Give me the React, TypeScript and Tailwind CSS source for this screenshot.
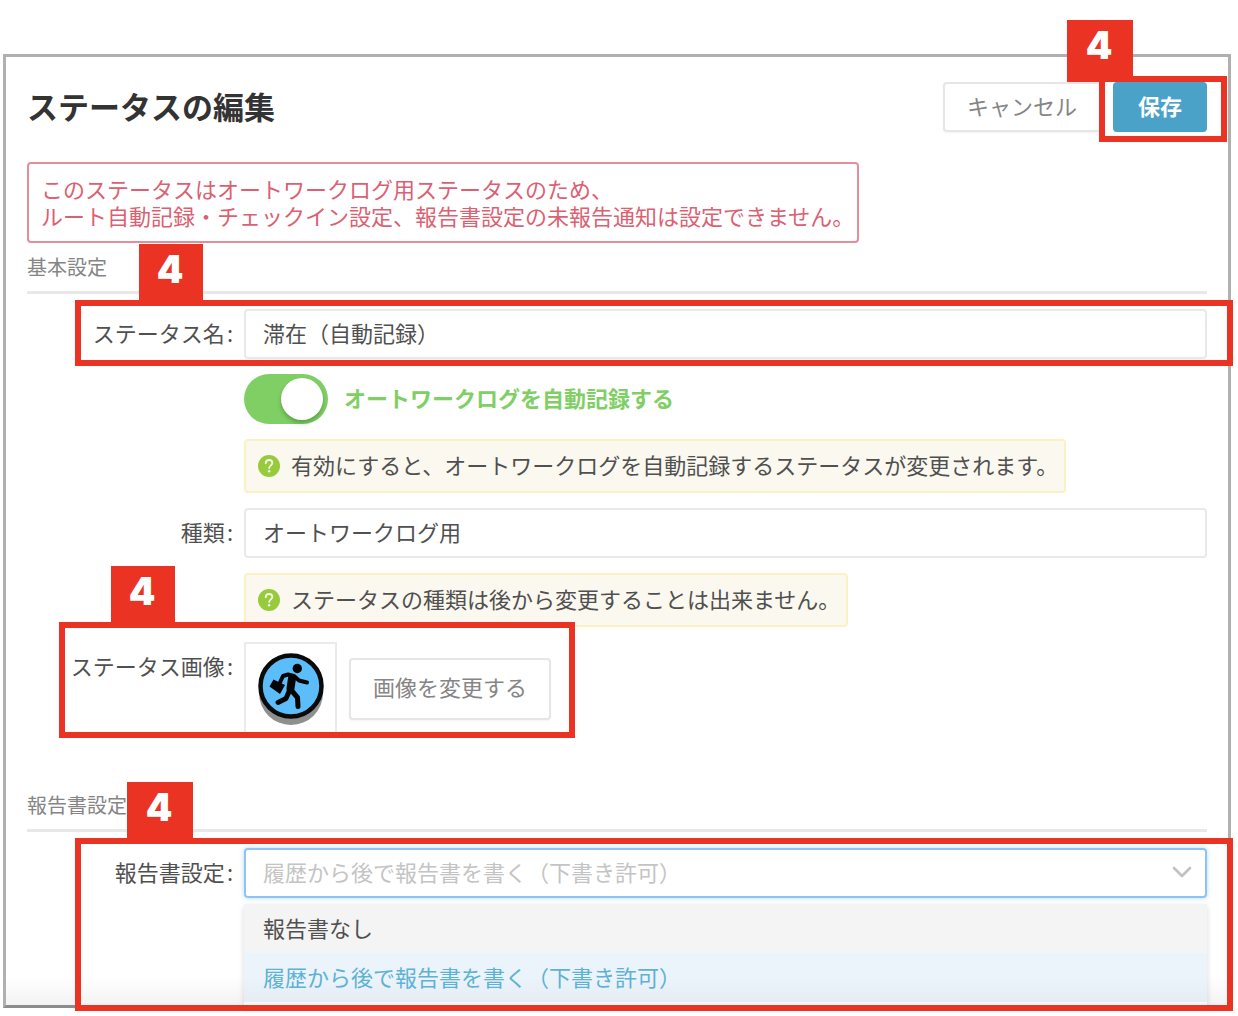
import { useState, type ReactNode } from 'react';
import { ChevronDown } from 'lucide-react';

const REPORT_OPTIONS = ['報告書なし', '履歴から後で報告書を書く（下書き許可）'];

// Red numbered frame drawn over the part of the form it explains
function Callout({ step, frame, badge }: { step: number; frame: string; badge: string }) {
  return (
    <div className={`pointer-events-none absolute z-10 border-6 border-[#ea3323] ${frame}`}>
      <span
        className={`absolute bottom-full h-[62px] bg-[#ea3323] pr-[2px] text-center font-['Inter',sans-serif] text-[38px] leading-[50px] font-black text-white ${badge}`}
      >
        {step}
      </span>
    </div>
  );
}

function SectionTitle({ children }: { children: ReactNode }) {
  return (
    <h2 className="border-b-3 border-[#e8e8e8] text-[20px] leading-[48px] text-[#858585]">{children}</h2>
  );
}

function FieldLabel({ htmlFor, children }: { htmlFor?: string; children: ReactNode }) {
  return (
    <label htmlFor={htmlFor} className="w-[217px] shrink-0 pr-[11px] text-right leading-[46px]">
      {children}
      <span className="ml-[2px]">:</span>
    </label>
  );
}

function Hint({ children }: { children: ReactNode }) {
  return (
    <div className="ml-[217px] flex h-[54px] w-fit items-center gap-[11px] rounded border-2 border-[#fbf2c4] bg-[#fbf8ef] pr-[6px] pl-3">
      <svg viewBox="0 0 22 22" className="size-[22px] shrink-0" aria-hidden="true">
        <circle cx="11" cy="11" r="11" fill="#97ca3d" />
        <path
          d="M7.7 8.3c.1-2 1.5-3.3 3.4-3.3s3.3 1.2 3.3 2.9c0 2.4-3.2 2.6-3.2 5.100"
          fill="none"
          stroke="#f4fae2"
          strokeWidth="1.8"
          strokeLinecap="round"
        />
        <circle cx="11.1" cy="16.3" r="1.2" fill="#f4fae2" />
      </svg>
      <p className="pb-1 whitespace-nowrap">{children}</p>
    </div>
  );
}

function StatusIcon() {
  return (
    <svg viewBox="0 0 70 76" className="h-[76px] w-[70px]" role="img" aria-label="外出">
      <circle cx="35" cy="42" r="32" fill="#8f8f8f" />
      <circle cx="35" cy="35" r="30.5" fill="#5bbdf9" stroke="#0a0a0a" strokeWidth="4.5" />
      <circle cx="41.3" cy="17.5" r="4.7" fill="#050505" />
      <path d="M17.5 28.5l11.5 5.5-5 9-10.500-7.500z" fill="#050505" />
      <g fill="none" stroke="#050505" strokeLinecap="round" strokeLinejoin="round">
        <path d="M24 31.500l3-6.500 5-1.500 6 1.500 5 4.500 8 2" strokeWidth="4" />
        <path d="M36 27.500l-1.500 10" strokeWidth="8" />
        <path d="M33.500 39.500l-3.500 8-8 4" strokeWidth="5" />
        <path d="M35.500 39.500l6 7 .5 9" strokeWidth="5" />
      </g>
    </svg>
  );
}

export default function App() {
  const [name, setName] = useState('滞在（自動記録）');
  const [autoLog, setAutoLog] = useState(true);
  const [report, setReport] = useState(REPORT_OPTIONS[1]);

  return (
    <main className="bg-white pt-[54px] pr-[7px] pb-[7px] pl-[3px] font-['Noto_Sans_CJK_JP',sans-serif] text-[22px] text-[#505050]">
      <div className="border-3 border-[#b0b0b0] border-b-[#8c8c8c] bg-linear-to-t from-[#f3f3f3] to-white to-[28px] px-[21px] pt-[25px]">
        <header className="flex items-start justify-between">
          <h1 className="text-[31px] leading-[48px] font-bold text-[#333]">ステータスの編集</h1>
          <div className="flex gap-3">
            <button
              type="button"
              className="h-[50px] w-[158px] rounded border-2 border-[#e6e6e6] bg-white pb-1 text-[#858585] shadow-xs"
            >
              キャンセル
            </button>
            <div className="relative">
              <button type="button" className="h-[50px] w-[94px] rounded bg-[#4aa2c9] pb-1 font-bold text-white">
                保存
              </button>
              <Callout step={4} frame="-top-[6px] -right-5 -bottom-[10px] -left-[14px]" badge="-left-[38px] w-[66px]" />
            </div>
          </div>
        </header>

        <p
          role="alert"
          className="mt-[30px] w-fit rounded border-2 border-[#e58d9b] bg-white pt-[11px] pr-[3px] pb-3 pl-3 leading-[27px] text-[#dc5f72]"
        >
          このステータスはオートワークログ用ステータスのため、
          <br />
          ルート自動記録・チェックイン設定、報告書設定の未報告通知は設定できません。
        </p>

        <section>
          <SectionTitle>基本設定</SectionTitle>
          <div className="mt-[15px] flex flex-col gap-[15px]">
            <div className="relative flex">
              <FieldLabel htmlFor="status-name">ステータス名</FieldLabel>
              <input
                id="status-name"
                value={name}
                onChange={(e) => setName(e.target.value)}
                className="h-[50px] min-w-0 flex-1 rounded-sm border-2 border-[#e9e9e9] bg-white px-[17px] pb-1"
              />
              <Callout step={4} frame="-top-[9px] -right-[26px] -bottom-[7px] left-12" badge="left-[58px] w-16" />
            </div>

            <label className="ml-[217px] flex w-fit items-center gap-4 font-bold text-[#80cf65]">
              <input
                type="checkbox"
                role="switch"
                checked={autoLog}
                onChange={(e) => setAutoLog(e.target.checked)}
                className="peer sr-only"
              />
              <span className="flex h-[50px] w-[84px] items-center rounded-full bg-[#cccccc] px-[5px] peer-checked:justify-end peer-checked:bg-[#80cf65]">
                <span className="size-[42px] rounded-full bg-white shadow-[0_3px_4px_rgba(0,60,0,0.3)]" />
              </span>
              <span className="pb-1">オートワークログを自動記録する</span>
            </label>

            <Hint>有効にすると、オートワークログを自動記録するステータスが変更されます。</Hint>

            <div className="flex">
              <FieldLabel htmlFor="status-kind">種類</FieldLabel>
              <input
                id="status-kind"
                readOnly
                value="オートワークログ用"
                className="h-[50px] min-w-0 flex-1 rounded-sm border-2 border-[#e9e9e9] bg-white px-[17px] pb-1"
              />
            </div>

            <Hint>ステータスの種類は後から変更することは出来ません。</Hint>

            <div className="relative flex w-fit">
              <FieldLabel htmlFor="change-image">ステータス画像</FieldLabel>
              <div className="flex items-center gap-3">
                <div className="flex size-[93px] items-center justify-center border-2 border-[#ebebeb] bg-white">
                  <StatusIcon />
                </div>
                <button
                  id="change-image"
                  type="button"
                  className="h-[62px] w-[202px] rounded border-2 border-[#e6e6e6] bg-white pb-1 text-[#858585] shadow-xs"
                >
                  画像を変更する
                </button>
              </div>
              <Callout step={4} frame="-top-5 -right-6 -bottom-[3px] left-8" badge="left-[46px] w-16" />
            </div>
          </div>
        </section>

        <section className="mt-[46px]">
          <SectionTitle>報告書設定</SectionTitle>
          <div className="relative mt-4 flex">
            <FieldLabel htmlFor="report">報告書設定</FieldLabel>
            <div className="min-w-0 flex-1">
              <div className="relative">
                <select
                  id="report"
                  value={report}
                  onChange={(e) => setReport(e.target.value)}
                  className="block h-[50px] w-full appearance-none rounded border-2 border-[#8fc3f8] bg-white px-[17px] pb-1 text-[#c4c4c4] shadow-[0_0_5px_rgba(74,162,201,0.4)]"
                >
                  {REPORT_OPTIONS.map((option) => (
                    <option key={option}>{option}</option>
                  ))}
                </select>
                <ChevronDown
                  size={32}
                  strokeWidth={2}
                  className="pointer-events-none absolute top-2 right-[9px] text-[#c2c2c2]"
                />
              </div>
              <ul
                role="listbox"
                aria-label="報告書設定"
                className="mt-[6px] bg-[#f8f8f8] pb-[3px] shadow-[0_3px_6px_rgba(0,0,0,0.15)]"
              >
                {REPORT_OPTIONS.map((option) => (
                  <li
                    key={option}
                    role="option"
                    aria-selected={option === report}
                    onClick={() => setReport(option)}
                    className="h-[49px] bg-[#f4f4f4] px-[19px] leading-[46px] aria-selected:bg-linear-to-b aria-selected:from-[#ebf3fb] aria-selected:from-50% aria-selected:to-[#e5ecf4] aria-selected:text-[#5eb2d4]"
                  >
                    {option}
                  </li>
                ))}
              </ul>
            </div>
            <Callout step={4} frame="-top-[10px] -right-[26px] -bottom-[6px] left-12" badge="left-[46px] w-[66px]" />
          </div>
        </section>
      </div>
    </main>
  );
}
